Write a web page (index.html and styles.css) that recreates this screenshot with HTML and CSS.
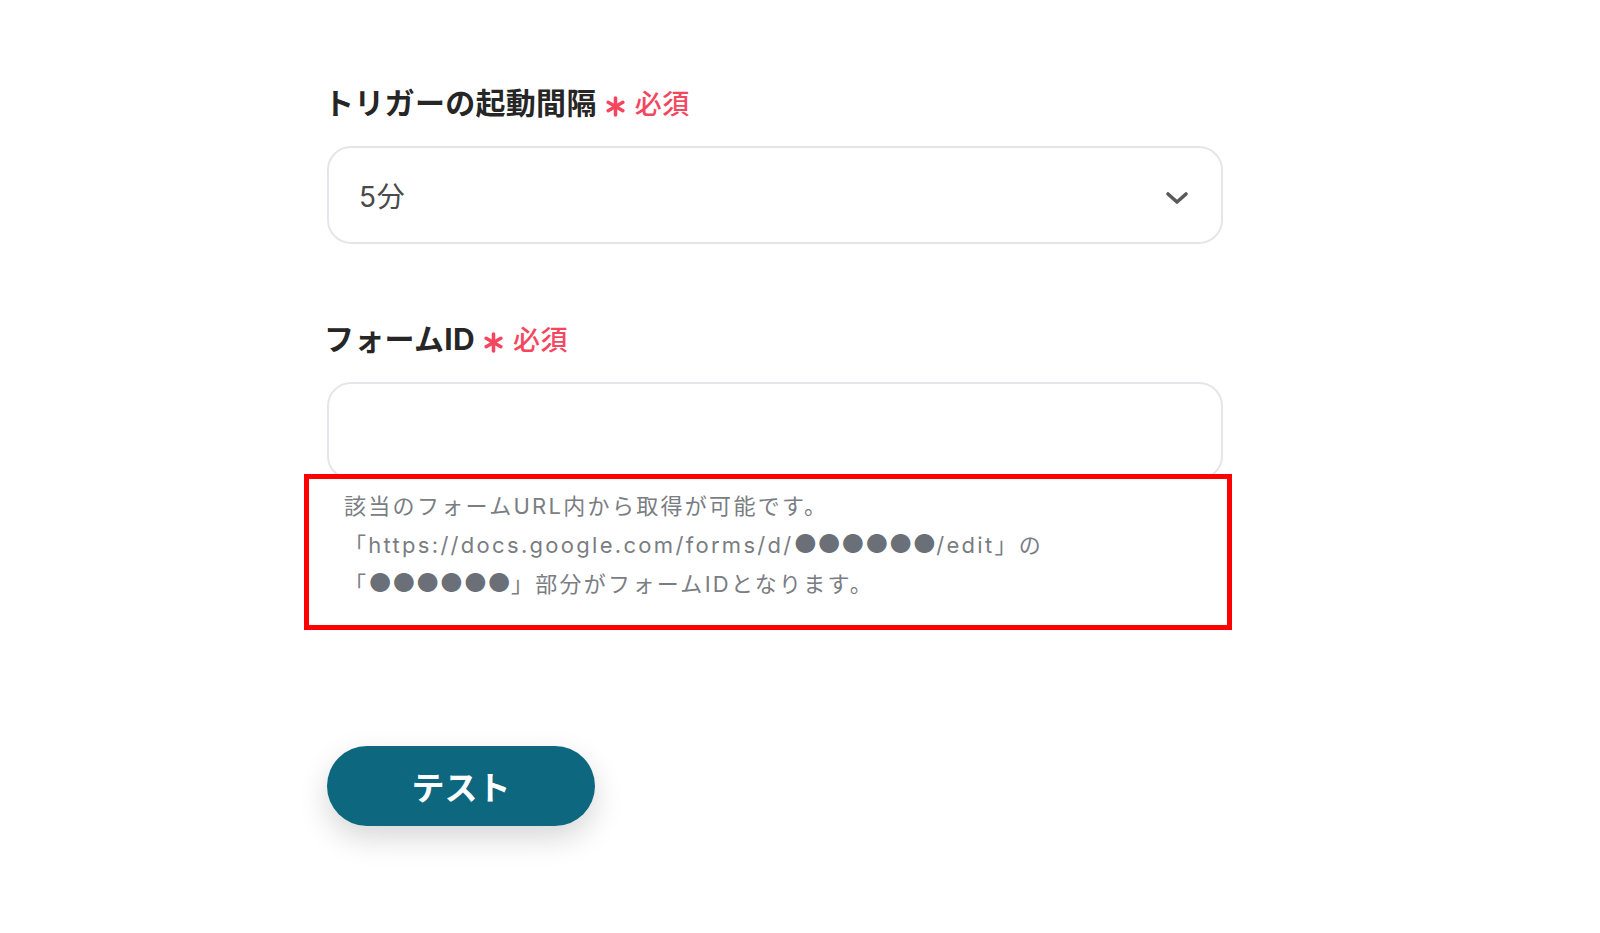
FILE: index.html
```html
<!DOCTYPE html>
<html lang="ja">
<head>
<meta charset="utf-8">
<link rel="stylesheet" href="styles.css">
</head>
<body>
<main class="form">
  <div class="field">
    <div class="label">トリガーの起動間隔<span class="req"><svg class="star" viewBox="0 0 20 20"><g stroke="currentColor" stroke-width="3.4" stroke-linecap="round"><line x1="10" y1="2" x2="10" y2="18"/><line x1="3" y1="6" x2="17" y2="14"/><line x1="3" y1="14" x2="17" y2="6"/></g></svg>必須</span></div>
    <div class="select">
      <span class="value">5分</span>
      <svg class="chev" viewBox="0 0 24 14"><polyline points="3,3 12,11 21,3" fill="none" stroke="#5a5a5a" stroke-width="3.6" stroke-linecap="round" stroke-linejoin="round"/></svg>
    </div>
  </div>
  <div class="field second">
    <div class="label">フォームID<span class="req"><svg class="star" viewBox="0 0 20 20"><g stroke="currentColor" stroke-width="3.4" stroke-linecap="round"><line x1="10" y1="2" x2="10" y2="18"/><line x1="3" y1="6" x2="17" y2="14"/><line x1="3" y1="14" x2="17" y2="6"/></g></svg>必須</span></div>
    <div class="input"></div>
    <div class="help">
      <p>該当のフォームURL内から取得が可能です。</p>
      <p>「https://docs.google.com/forms/d/<span class="dots">●●●●●●</span>/edit」の</p>
      <p>「<span class="dots">●●●●●●</span>」部分がフォームIDとなります。</p>
    </div>
  </div>
  <button class="test">テスト</button>
</main>
</body>
</html>
```
FILE: styles.css
```css
* { box-sizing: border-box; }
html, body { margin: 0; padding: 0; background: #ffffff; }
body {
  font-family: "Noto Sans CJK JP", "Noto Sans", sans-serif;
  color: #2b2b2b;
}
.form {
  width: 896px;
  margin-left: 327px;
  padding-top: 82px;
  padding-bottom: 60px;
  display: flex;
  flex-direction: column;
}
.label {
  display: flex;
  align-items: center;
  font-family: Inter, "Noto Sans CJK JP", sans-serif;
  font-size: 30px;
  font-weight: 700;
  line-height: 42px;
  height: 42px;
  margin-left: -3px;
  letter-spacing: 0.3px;
  color: #262626;
}
.req {
  display: flex;
  align-items: center;
  color: #f4475f;
  font-size: 27px;
  font-weight: 500;
  margin-left: 8px;
  margin-top: 4px;
  letter-spacing: 0.5px;
}
.star { width: 21px; height: 21px; margin-right: 9px; margin-top: 2px; }
.select, .input {
  margin-top: 22px;
  height: 98px;
  border: 2px solid #e4e6ea;
  border-radius: 24px;
  background: #fff;
}
.select {
  display: flex;
  align-items: center;
  justify-content: space-between;
  padding: 0 32px 0 30px;
}
.value { font-family: Inter, "Noto Sans CJK JP", sans-serif; font-size: 28px; color: #4a4a4a; letter-spacing: 0.8px; }
.chev { width: 24px; height: 14px; margin-top: 6px; }
.second { margin-top: 74px; }
.input { height: 98px; }
.help {
  position: relative;
  margin-top: -6px;
  margin-left: -23px;
  width: 928px;
  border: 5px solid #ff0000;
  padding: 8px 30px 21px 35px;
  background: #fff;
}
.help p {
  margin: 0;
  height: 39px;
  font-family: Inter, "Noto Sans CJK JP", sans-serif;
  font-size: 22px;
  line-height: 39px;
  color: #7a7d82;
  letter-spacing: 2.3px;
}
.dots { color: #6b7078; letter-spacing: 0; font-size: 26px; line-height: 20px; }
.test {
  margin-top: 116px;
  width: 268px;
  height: 80px;
  border: none;
  border-radius: 40px;
  background: #0c677f;
  color: #fff;
  font-family: "Noto Sans CJK JP", sans-serif;
  font-size: 33px;
  font-weight: 700;
  box-shadow: 0 12px 30px rgba(0,0,0,0.16);
  padding: 0;
}
```
